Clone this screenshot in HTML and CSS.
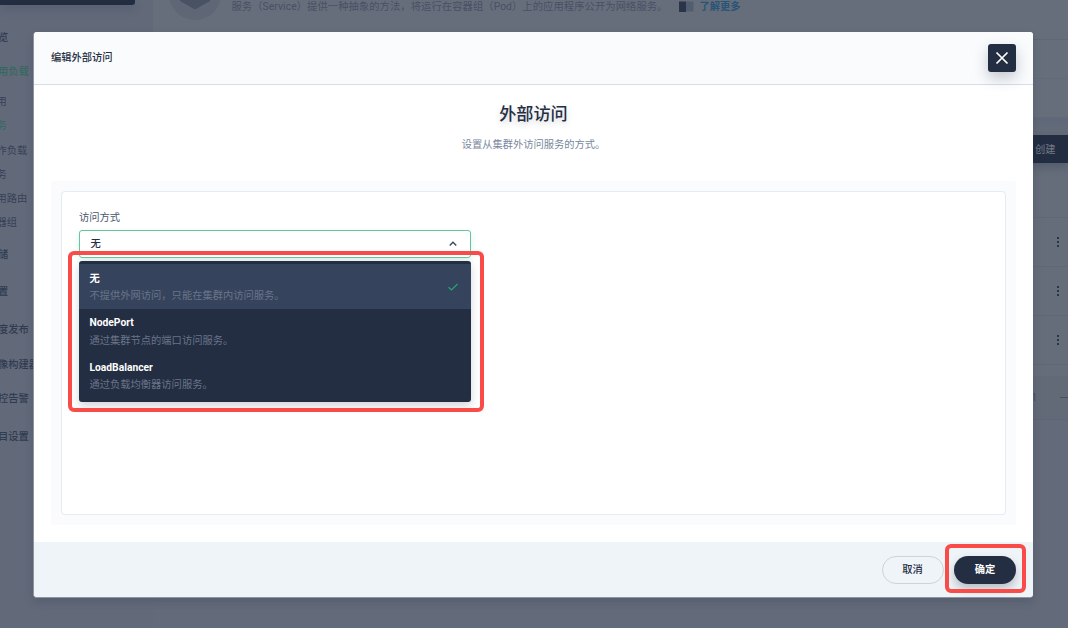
FILE: index.html
```html
<!DOCTYPE html>
<html lang="zh-CN">
<head>
<meta charset="utf-8">
<title>编辑外部访问</title>
<link rel="stylesheet" href="styles.css">
</head>
<body>
<div class="page">
  <aside class="sidebar">
    <div class="project"></div>
    <nav class="nav">
      <span class="item">览</span>
      <span class="item active">用负载</span>
      <span class="item sub">用</span>
      <span class="item sub active">务</span>
      <span class="item sub">作负载</span>
      <span class="item sub">务</span>
      <span class="item sub">用路由</span>
      <span class="item sub">器组</span>
      <span class="item">储</span>
      <span class="item">置</span>
      <span class="item">度发布</span>
      <span class="item">像构建器</span>
      <span class="item">控告警</span>
      <span class="item">目设置</span>
    </nav>
  </aside>
  <main class="main">
    <section class="banner">
      <div class="intro">
        <svg class="intro-icon" width="54" height="22" viewBox="0 0 54 22"><circle cx="27" cy="-6" r="26" fill="#5f6776"/><path d="M12 1V-16L27-25L42-16V1L27 9.500Z" fill="#485263"/></svg>
        <span class="intro-text">服务（Service）提供一种抽象的方法，将运行在容器组（Pod）上的应用程序公开为网络服务。</span>
        <svg class="book" width="15" height="11" viewBox="0 0 15 11"><path d="M0 0.500H7V11H0Z" fill="#2b3549"/><path d="M7 0.500H14.500V10.500H7Z" fill="#535d70"/></svg>
        <span class="more">了解更多</span>
      </div>
      <div class="banner-row"></div>
      <div class="banner-row"></div>
    </section>
    <div class="toolbar"><span class="create">创建</span></div>
    <section class="table">
      <div class="thead"></div>
      <div class="row"><i class="dots"></i></div>
      <div class="row"><i class="dots"></i></div>
      <div class="row"><i class="dots"></i></div>
      <div class="spacer"></div>
      <div class="pager"><span>1</span><i class="dash"></i></div>
    </section>
  </main>
</div>

<div class="mask">
  <div class="modal">
    <header class="modal-head">
      <span>编辑外部访问</span>
      <button class="close"><svg width="28" height="28" viewBox="0 0 28 28"><path d="M8.500 8.500L19.500 19.500M19.500 8.500L8.500 19.500" stroke="#fff" stroke-width="1.700" fill="none"/></svg></button>
    </header>
    <div class="modal-body">
      <h1 class="title">外部访问</h1>
      <p class="desc">设置从集群外访问服务的方式。</p>
      <div class="panel">
        <div class="card">
          <div class="label">访问方式</div>
          <div class="select">
            <span>无</span>
            <svg width="10" height="8" viewBox="0 0 10 8"><path d="M1.700 5.500L5 2.200L8.300 5.500" stroke="#36435c" stroke-width="1.300" fill="none"/></svg>
            <div class="menu">
              <div class="option selected">
                <div class="option-copy"><b>无</b><span>不提供外网访问，只能在集群内访问服务。</span></div>
                <svg width="12" height="10" viewBox="0 0 12 10"><path d="M1.500 5.200L4.500 8L10.500 2" stroke="#1fa873" stroke-width="1.200" fill="none"/></svg>
              </div>
              <div class="option"><div class="option-copy"><b>NodePort</b><span>通过集群节点的端口访问服务。</span></div></div>
              <div class="option"><div class="option-copy"><b>LoadBalancer</b><span>通过负载均衡器访问服务。</span></div></div>
            </div>
          </div>
        </div>
      </div>
    </div>
    <footer class="modal-foot">
      <button class="btn">取消</button>
      <button class="btn primary">确定</button>
    </footer>
  </div>
</div>
<div class="highlight highlight-menu"></div>
<div class="highlight highlight-ok"></div>
</body>
</html>
```
FILE: styles.css
```css
* { box-sizing: border-box; }
body {
  margin: 0;
  width: 1068px;
  height: 628px;
  overflow: hidden;
  position: relative;
  font: 10.28px/14px Roboto, "Noto Sans CJK SC", sans-serif;
  color: #242e42;
  background: #636a79;
}
button { font: inherit; border: 0; padding: 0; }

/* page behind the dialog */
.page { display: flex; height: 628px; }
.sidebar { width: 153px; flex: none; background: #626a7a; }
.project {
  width: 135px;
  height: 5px;
  background: #232d41;
  border-radius: 0 0 3px 0;
  box-shadow: 0 4px 8px rgba(36, 46, 66, .25);
}
.nav {
  display: grid;
  grid-template-rows: 34px 30px 24px 25px 24px 24px 24px 32px 37px 38px 35px 34px 38px 14px;
  padding-top: 26px;
  margin-left: -2px;
}
.item { white-space: nowrap; color: #303b51; font-weight: 500; }
.sub { margin-left: -1.5px; font-weight: 400; color: #364157; }
.item.active { color: #34695f; }
.main { flex: 1; min-width: 0; }
.banner { height: 118px; background: #676e7b; border-bottom: 1px solid #5e6776; }
.intro { display: flex; height: 40px; border-bottom: 1px solid #5f6877; padding-left: 15px; }
.intro-icon { flex: none; margin-right: 9.5px; }
.intro-text { white-space: nowrap; color: #465165; letter-spacing: .1px; }
.book { margin: 1px 5px 0 12px; flex: none; }
.more { color: #285577; font-weight: 700; white-space: nowrap; }
.banner-row { height: 39px; border-bottom: 1px solid #626a78; }
.toolbar {
  height: 45px;
  padding-top: 17px;
  display: flex;
  justify-content: flex-end;
  background: linear-gradient(#5e6879, #636b79 12px);
}
.create {
  width: 100px;
  height: 28px;
  padding: 8px 0 0 67px;
  background: #232d41;
  color: #737a87;
  box-shadow: 0 4px 8px rgba(36, 46, 66, .25);
}
.table { background: #666d7a; height: 257px; border-bottom: 1px solid #5e6776; }
.thead { height: 55px; border-bottom: 1px solid #5f6876; background: #656c7a; }
.row { height: 49px; border-bottom: 1px solid #5f6876; display: flex; justify-content: flex-end; align-items: center; padding-right: 9px; }
.dots { width: 2px; height: 2px; background: #293449; box-shadow: 0 -4px #293449, 0 4px #293449; }
.spacer { height: 11px; }
.pager { height: 43px; background: #626a78; display: flex; align-items: center; justify-content: flex-end; color: #465165; gap: 23px; }
.dash { width: 8px; height: 1px; background: #465165; }

/* dialog */
.mask { position: absolute; inset: 0; padding: 32px 35px 0 33px; }
.modal {
  height: 566px;
  display: flex;
  flex-direction: column;
  background: #fff;
  border: solid #8d95a3;
  border-width: 0 0 1px 1px;
  border-radius: 4px;
  box-shadow: 0 4px 8px rgba(36, 46, 66, .2);
}
.modal-head {
  height: 53px;
  flex: none;
  display: flex;
  align-items: center;
  justify-content: space-between;
  padding: 0 17px;
  background: #f9fbfd;
  border-bottom: 1px solid #d5dde7;
  border-radius: 3px 3px 0 0;
  font-weight: 500;
}
.modal-head span { margin-top: -1px; }
.close {
  width: 28px;
  height: 28px;
  background: #242e42;
  border-radius: 3px;
  box-shadow: 0 6px 14px rgba(36, 46, 66, .25);
}
.close svg { display: block; }
.modal-body { flex: 1; padding: 17px 17px 0; }
.title {
  margin: 0;
  font-size: 17.14px;
  line-height: 24px;
  font-weight: 500;
  text-align: center;
  text-shadow: 0 3px 6px rgba(36, 46, 66, .2);
}
.desc { margin: 12px 0 0; text-align: center; color: #79879c; }
.panel { margin-top: 29px; height: 344px; padding: 10px; background: #f9fbfd; border-radius: 3px; }
.card { height: 324px; padding: 19px 17px 17px; background: #fff; border: 1px solid #e5ebf1; border-radius: 4px; }
.label { color: #4a566c; }
.select {
  position: relative;
  width: 391.5px;
  height: 28px;
  margin-top: 5px;
  padding: 0 12px 0 10.5px;
  display: flex;
  align-items: center;
  justify-content: space-between;
  border: 1px solid #65c499;
  border-radius: 3px;
  font-weight: 500;
  box-shadow: 0 3px 6px rgba(85, 188, 138, .2);
}
.menu {
  position: absolute;
  left: -1px;
  top: 30px;
  width: 391.5px;
  height: 141px;
  padding: 3px 0 4px;
  background: #242e42;
  border-radius: 3px;
  box-shadow: 0 4px 8px rgba(36, 46, 66, .2);
}
.option { height: 44.6px; padding: 2px 11.5px 0 10.5px; display: flex; align-items: center; justify-content: space-between; }
.option.selected { background: #36435c; }
.option-copy { display: grid; gap: 3.5px; color: #69758a; font-weight: 400; }
.option b { color: #fff; }
.modal-foot {
  height: 55px;
  flex: none;
  display: flex;
  justify-content: flex-end;
  align-items: center;
  gap: 10.5px;
  padding-right: 17px;
  background: #eff4f8;
  border-radius: 0 0 3px 3px;
}
.btn { width: 62px; height: 28px; border: 1px solid #ccd3db; border-radius: 14px; background: #eff4f8; color: #242e42; font-weight: 500; }
.btn.primary { border: 0; background: #242e42; color: #fff; font-weight: 700; box-shadow: 0 5px 10px rgba(36, 46, 66, .28); }

/* callout frames */
.highlight { position: absolute; border: 4px solid #f94c48; border-radius: 6px; }
.highlight-menu { left: 68px; top: 251px; width: 416px; height: 161px; }
.highlight-ok { left: 945px; top: 544px; width: 81px; height: 49px; }
```
